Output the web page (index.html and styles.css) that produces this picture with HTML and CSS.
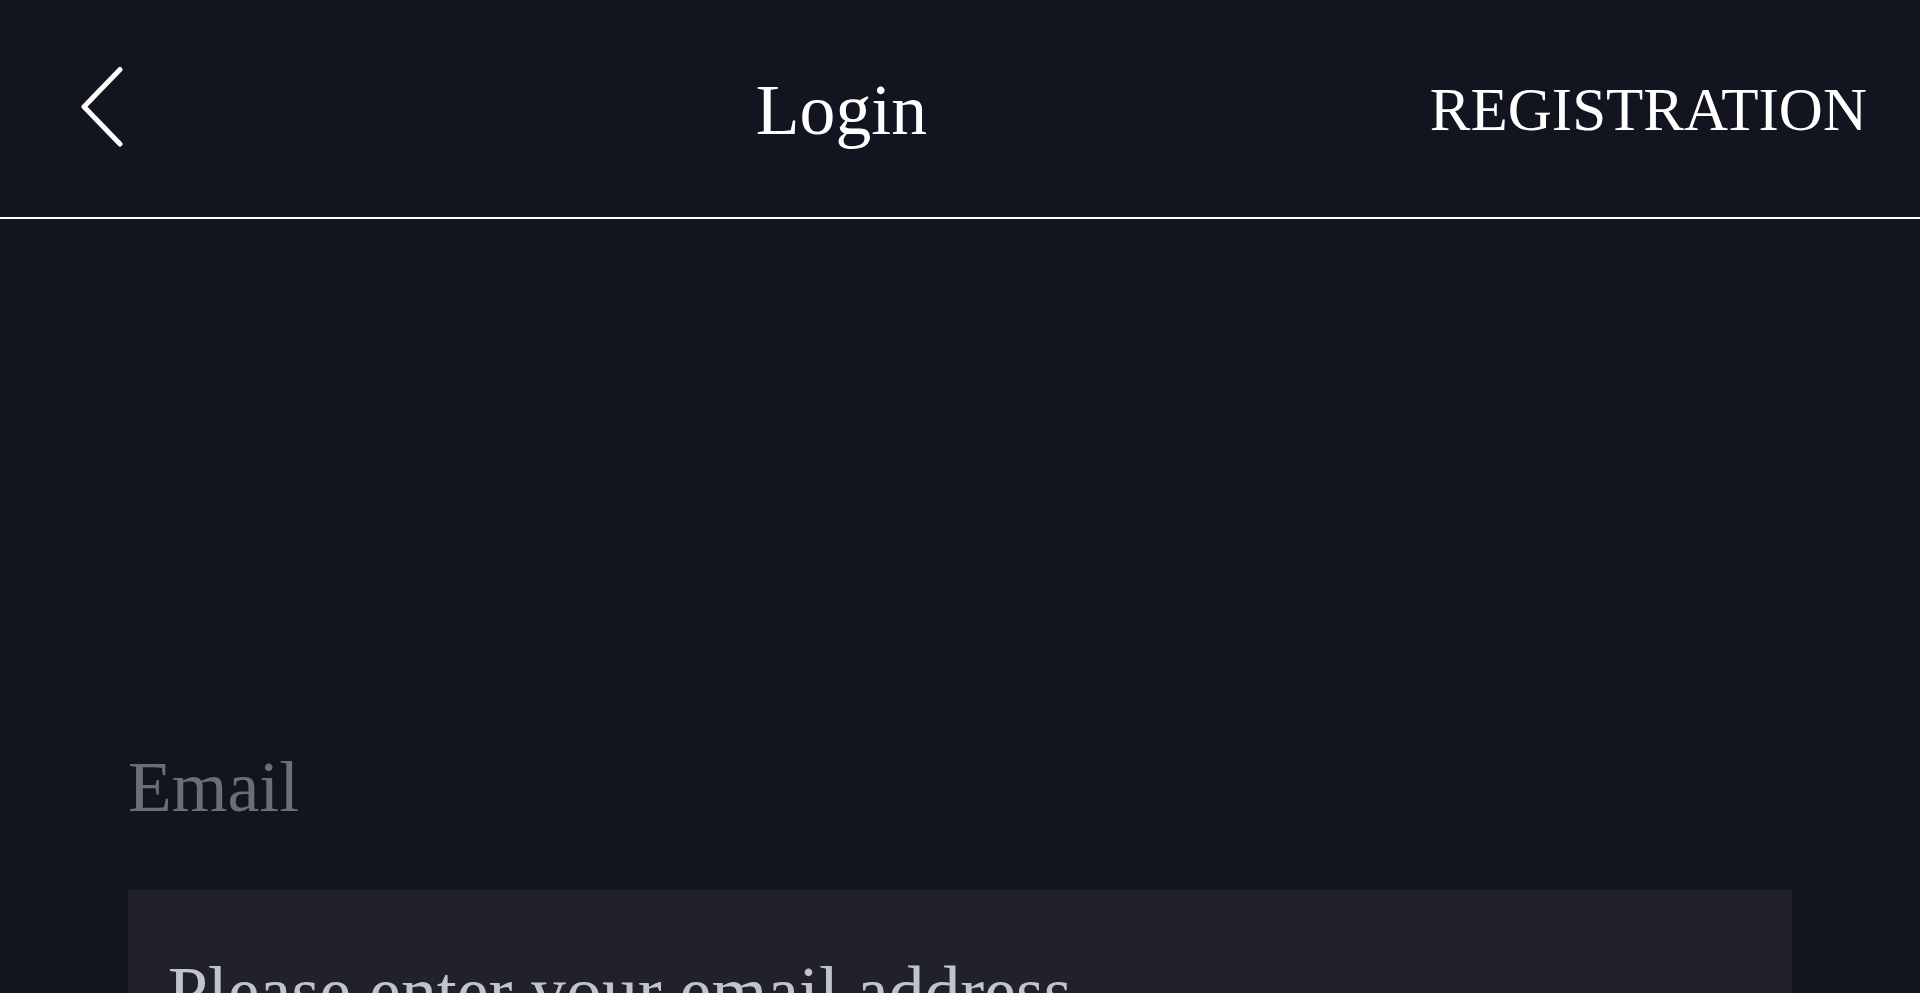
FILE: index.html
```html
<!DOCTYPE html>
<html lang="en">
<head>
<meta charset="utf-8">
<title>Login</title>
<link rel="stylesheet" href="styles.css">
</head>
<body>
<header class="topbar">
  <a class="back" href="#" aria-label="Back">
    <svg class="back-icon" viewBox="0 0 44 82" width="44" height="82" aria-hidden="true">
      <path d="M39 3.5 L3 40.7 L39 78" fill="none" stroke="#ffffff" stroke-width="5" stroke-linecap="round" stroke-linejoin="round"/>
    </svg>
  </a>
  <h1 class="title">Login</h1>
  <a class="register" href="#">REGISTRATION</a>
</header>
<main class="content">
  <div class="hero"></div>
  <form class="form">
    <label class="field-label" for="email">Email</label>
    <input class="field-input" id="email" type="email" placeholder="Please enter your email address">
  </form>
</main>
</body>
</html>
```
FILE: styles.css
```css
html, body {
  margin: 0;
  padding: 0;
  background: #12141f;
  color: #ffffff;
  font-family: "Liberation Serif", "Times New Roman", serif;
  overflow: hidden;
}

.topbar {
  height: 213px;
  border-bottom: 2px solid #ffffff;
  display: flex;
  align-items: center;
  justify-content: space-between;
  padding: 4px 53px 0 81px;
}

.back {
  width: 172px;
  display: flex;
  align-items: center;
  color: #ffffff;
  text-decoration: none;
}

.back-icon {
  display: block;
  margin-top: -7px;
}

.title {
  margin: 0;
  font-size: 71.7px;
  font-weight: 400;
  line-height: 1.15;
}

.register {
  font-size: 61px;
  line-height: 1.15;
  color: #ffffff;
  text-decoration: none;
}

.content {
  padding: 0 128px;
}

.hero {
  height: 527px;
}

.form {
  display: flex;
  flex-direction: column;
}

.field-label {
  font-size: 71.7px;
  line-height: 1.15;
  color: #6b6d78;
  margin-bottom: 62px;
}

.field-input {
  box-sizing: border-box;
  width: 100%;
  margin: 0;
  border: 0;
  outline: none;
  background: #20212c;
  color: #c2c4cc;
  font-family: "Liberation Serif", "Times New Roman", serif;
  font-size: 71.7px;
  line-height: 82px;
  height: 204px;
  padding: 61px 40px;
}

.field-input::placeholder {
  color: #c2c4cc;
  opacity: 1;
}
```
